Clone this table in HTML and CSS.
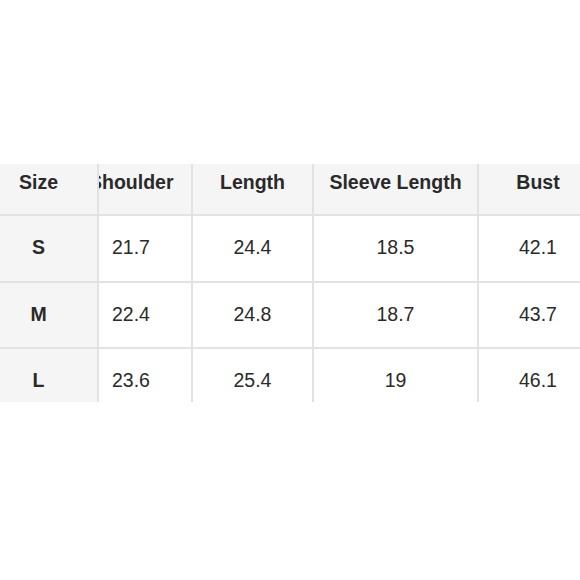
FILE: index.html
```html
<!DOCTYPE html>
<html>
<head>
<meta charset="utf-8">
<link rel="stylesheet" href="styles.css">
</head>
<body>
<div class="chart">
  <div class="cell head first">Size</div>
  <div class="cell head clip"><span class="shift">Shoulder</span></div>
  <div class="cell head">Length</div>
  <div class="cell head">Sleeve Length</div>
  <div class="cell head">Bust</div>

  <div class="cell first size">S</div>
  <div class="cell left">21.7</div>
  <div class="cell">24.4</div>
  <div class="cell">18.5</div>
  <div class="cell">42.1</div>

  <div class="cell first size">M</div>
  <div class="cell left">22.4</div>
  <div class="cell">24.8</div>
  <div class="cell">18.7</div>
  <div class="cell">43.7</div>

  <div class="cell first size">L</div>
  <div class="cell left">23.6</div>
  <div class="cell">25.4</div>
  <div class="cell">19</div>
  <div class="cell">46.1</div>
</div>
</body>
</html>
```
FILE: styles.css
```css
html, body {
  margin: 0;
  padding: 0;
  overflow: hidden;
  background: #ffffff;
}
body {
  width: 580px;
  height: 580px;
  font-family: "Liberation Sans", Arial, sans-serif;
  color: #2a2a2a;
}
.chart {
  margin-top: 164px;
  display: grid;
  grid-template-columns: 97px 92px 119px 163px 118px;
  grid-template-rows: 50px 65px 64px 53px;
  gap: 2px;
  background: #e2e2e2;
  width: max-content;
}
.cell {
  background: #ffffff;
  font-size: 19.5px;
  line-height: 22px;
  text-align: center;
  padding-top: 20px;
  white-space: nowrap;
  box-sizing: border-box;
}
.head {
  background: #f5f5f5;
  font-weight: bold;
  padding-top: 7px;
}
.first {
  background: #f5f5f5;
  padding-right: 20px;
}
.size {
  font-weight: bold;
}
.left {
  text-align: left;
  padding-left: 13px;
}
.clip {
  overflow: hidden;
  text-align: left;
}
.shift {
  display: inline-block;
  margin-left: -10px;
}
```
